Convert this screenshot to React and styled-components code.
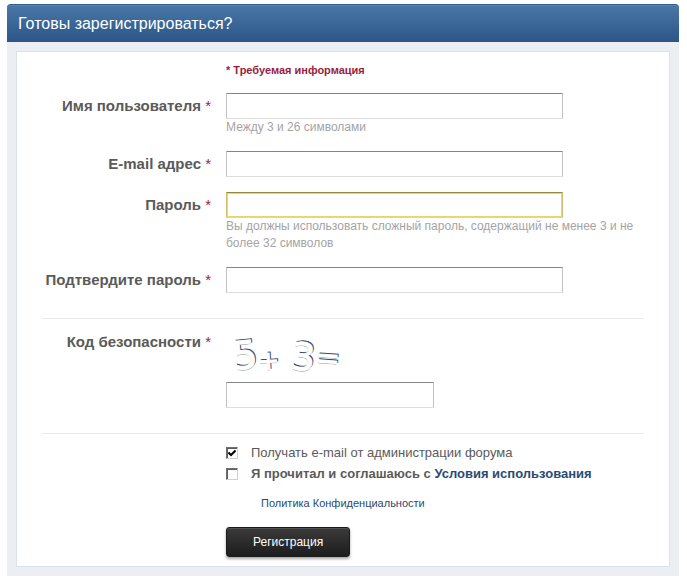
import React from "react";
import styled, { createGlobalStyle } from "styled-components";

const GlobalStyle = createGlobalStyle`
  *, *::before, *::after {
    box-sizing: border-box;
  }
  body {
    margin: 0;
    background: #fff;
    color: #5a5a5a;
    font-family: "Liberation Sans", Arial, sans-serif;
    font-size: 13px;
  }
`;

const Panel = styled.section`
  margin: 4px 8px 10px 7px;
  border-radius: 4px 4px 0 0;
  background: #ebeff3;
`;

const PanelTitle = styled.h2`
  margin: 0;
  padding: 0 11px;
  border-top: 1px solid #2f5d8c;
  border-radius: 4px 4px 0 0;
  background: linear-gradient(#4977a6, #3a6797 50%, #2c5687);
  box-shadow: inset 0 1px 0 #5585b4;
  color: #fff;
  font-size: 16px;
  font-weight: 400;
  line-height: 37px;
`;

const PanelBody = styled.div`
  padding: 9px;
`;

const Form = styled.form`
  padding: 10px 15px 9px 25px;
  border: 1px solid #dbe2ec;
  background: #fff;
`;

const Row = styled.div`
  display: grid;
  grid-template-columns: 169px minmax(0, 1fr);
  column-gap: 15px;
  margin-bottom: 15px;
  &:last-child {
    margin-bottom: 0;
  }
`;

const Label = styled.label`
  color: #5a5a5a;
  font-size: 15px;
  font-weight: 700;
  line-height: 26px;
  text-align: right;
  white-space: nowrap;
`;

const Star = styled.span`
  color: #9b2242;
  font-weight: 400;
`;

const Field = styled.div`
  grid-column: 2;
`;

const Required = styled.p`
  margin: 0;
  color: #9b1c3d;
  font-size: 11px;
  font-weight: 700;
  line-height: 16px;
`;

const TextInput = styled.input`
  display: block;
  width: ${(props) => (props.$short ? "208px" : "337px")};
  max-width: 100%;
  height: 26px;
  padding: 4px;
  border: 1px solid;
  border-color: #848484 #c1c1c1 #ddd;
  border-radius: 1px;
  background: #fff;
  font: inherit;
  outline: none;
  ${(props) =>
    props.$active &&
    `
    border-color: #9b8637 #cdbf72 #e6d883 #d3c062;
    box-shadow: inset 0 0 0 1px #e5d670;
  `}
`;

const Hint = styled.p`
  margin: 0;
  color: #a4a4a4;
  font-size: 12px;
  line-height: 17px;
`;

const Rule = styled.hr`
  height: 1px;
  margin: 25px 10px 8px 0;
  border: 0;
  background: #ebebeb;
`;

const Captcha = styled.svg`
  display: block;
  width: 130px;
  height: 53px;
  overflow: visible;
  font-family: "DejaVu Sans", sans-serif;
`;

const CodeRow = styled(Row)`
  padding-top: 2px;
`;

const CheckRow = styled.div`
  display: flex;
  align-items: center;
  gap: 13px;
  height: 21px;
  font-size: 13px;
  font-weight: ${(props) => (props.$bold ? 700 : 400)};
`;

const Tick = styled.input`
  appearance: none;
  flex: none;
  width: 12px;
  height: 12px;
  margin: 0;
  border: 1px solid;
  border-color: #707070 #d0d0d0 #d0d0d0 #707070;
  background: #fff;
  box-shadow: inset 1px 1px 0 #5c5c5c;
  &:checked {
    background: #fff
      url("data:image/svg+xml,%3Csvg xmlns='http://www.w3.org/2000/svg' viewBox='0 0 8 8'%3E%3Cpath d='M0.5 3.5L3 6L7.5 1.5' fill='none' stroke='%23000' stroke-width='2'/%3E%3C/svg%3E")
      center / 8px 8px no-repeat;
  }
`;

const Link = styled.a`
  color: #284b72;
  text-decoration: none;
`;

const Privacy = styled.p`
  margin: 11px 0 16px 35px;
  font-size: 11px;
  line-height: 16px;
`;

const Submit = styled.button`
  display: block;
  height: 30px;
  padding: 0 26px;
  border: 1px solid #1b1b1b;
  border-radius: 3px;
  background: linear-gradient(#3a3a3a, #1d1d1d);
  box-shadow: inset 0 1px 0 #505050, 0 2px 3px rgba(0, 0, 0, 0.35);
  color: #fff;
  font-family: inherit;
  font-size: 12px;
`;

const glyphs = [
  { char: "5", x: 9, y: 40, size: 39, turn: -6 },
  { char: "+", x: 33, y: 40, size: 26, turn: -3 },
  { char: "3", x: 65, y: 39, size: 38, turn: 5 },
  { char: "=", x: 90, y: 37, size: 29, turn: 4 },
];

// Embossed digit: a white face over a navy edge and a pale lower shadow
function Glyph({ char, x, y, size, turn }) {
  return (
    <g transform={`translate(${x} ${y}) rotate(${turn})`} fontSize={size}>
      <text x="-1" y="2" fill="#8d99ad" aria-hidden="true">
        {char}
      </text>
      <text fill="#3a4c6b" stroke="#3a4c6b">
        {char}
      </text>
      <text x="-1" y="1" fill="#fff" stroke="#fff" aria-hidden="true">
        {char}
      </text>
    </g>
  );
}

function FormRow({ id, label, hint, active, type = "text" }) {
  return (
    <Row>
      <Label htmlFor={id}>
        {label} <Star>*</Star>
      </Label>
      <Field>
        <TextInput id={id} type={type} $active={active} />
        {hint && <Hint>{hint}</Hint>}
      </Field>
    </Row>
  );
}

function App() {
  return (
    <>
      <GlobalStyle />
      <Panel>
        <PanelTitle>Готовы зарегистрироваться?</PanelTitle>
        <PanelBody>
          <Form onSubmit={(e) => e.preventDefault()}>
            <Row>
              <Field>
                <Required>* Требуемая информация</Required>
              </Field>
            </Row>
            <FormRow id="username" label="Имя пользователя" hint="Между 3 и 26 символами" />
            <FormRow id="email" label="E-mail адрес" type="email" />
            <FormRow
              id="password"
              label="Пароль"
              type="password"
              active
              hint="Вы должны использовать сложный пароль, содержащий не менее 3 и не более 32 символов"
            />
            <FormRow id="confirm" label="Подтвердите пароль" type="password" />
            <Rule />
            <CodeRow>
              <Label htmlFor="code">
                Код безопасности <Star>*</Star>
              </Label>
              <Field>
                <Captcha viewBox="0 0 130 53">
                  {glyphs.map((glyph) => (
                    <Glyph key={glyph.char} {...glyph} />
                  ))}
                </Captcha>
                <TextInput id="code" type="text" $short />
              </Field>
            </CodeRow>
            <Rule />
            <Row>
              <Field>
                <CheckRow>
                  <Tick id="news" type="checkbox" defaultChecked />
                  <label htmlFor="news">Получать e-mail от администрации форума</label>
                </CheckRow>
                <CheckRow $bold>
                  <Tick id="agree" type="checkbox" />
                  <label htmlFor="agree">
                    Я прочитал и соглашаюсь с <Link href="#terms">Условия использования</Link>
                  </label>
                </CheckRow>
                <Privacy>
                  <Link href="#privacy">Политика Конфиденциальности</Link>
                </Privacy>
                <Submit type="submit">Регистрация</Submit>
              </Field>
            </Row>
          </Form>
        </PanelBody>
      </Panel>
    </>
  );
}

export default App;
